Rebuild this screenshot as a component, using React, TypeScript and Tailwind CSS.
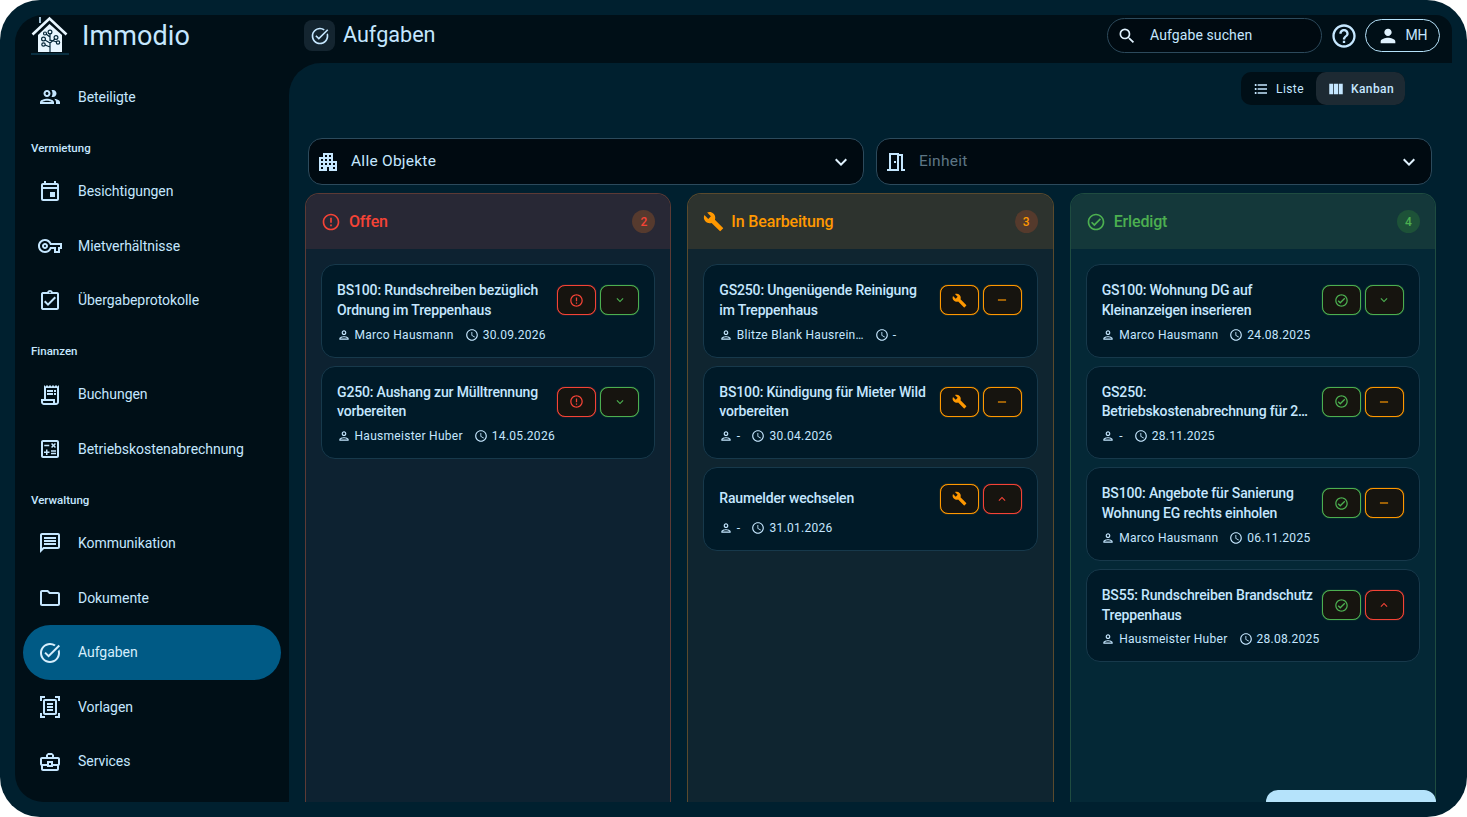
import React from 'react';
import {
    MdOutlineGroup,
    MdOutlineEvent,
    MdOutlineVpnKey,
    MdOutlineAssignmentTurnedIn,
    MdOutlineReceiptLong,
    MdOutlineCalculate,
    MdOutlineMessage,
    MdOutlineFolder,
    MdOutlineTaskAlt,
    MdOutlineDocumentScanner,
    MdOutlineBusinessCenter,
    MdSearch,
    MdOutlineHelpOutline,
    MdPerson,
    MdOutlinePerson,
    MdFormatListBulleted,
    MdViewColumn,
    MdApartment,
    MdOutlineMeetingRoom,
    MdKeyboardArrowDown,
    MdKeyboardArrowUp,
    MdErrorOutline,
    MdBuild,
    MdOutlineCheckCircle,
    MdRemove,
    MdOutlineSchedule,
} from 'react-icons/md';

type TStatus = 'open' | 'progress' | 'done';
type TPriority = 'low' | 'medium' | 'high';

interface ITask {
    title: string;
    person: string;
    date: string;
    status: TStatus;
    priority: TPriority;
}

const navSections = [
    { label: '', items: [{ name: 'Beteiligte', icon: MdOutlineGroup }] },
    {
        label: 'Vermietung',
        items: [
            { name: 'Besichtigungen', icon: MdOutlineEvent },
            { name: 'Mietverhältnisse', icon: MdOutlineVpnKey },
            { name: 'Übergabeprotokolle', icon: MdOutlineAssignmentTurnedIn },
        ],
    },
    {
        label: 'Finanzen',
        items: [
            { name: 'Buchungen', icon: MdOutlineReceiptLong },
            { name: 'Betriebskostenabrechnung', icon: MdOutlineCalculate },
        ],
    },
    {
        label: 'Verwaltung',
        items: [
            { name: 'Kommunikation', icon: MdOutlineMessage },
            { name: 'Dokumente', icon: MdOutlineFolder },
            { name: 'Aufgaben', icon: MdOutlineTaskAlt },
            { name: 'Vorlagen', icon: MdOutlineDocumentScanner },
            { name: 'Services', icon: MdOutlineBusinessCenter },
        ],
    },
];

const openTasks: ITask[] = [
    { title: 'BS100: Rundschreiben bezüglich\nOrdnung im Treppenhaus', person: 'Marco Hausmann', date: '30.09.2026', status: 'open', priority: 'low' },
    { title: 'G250: Aushang zur Mülltrennung\nvorbereiten', person: 'Hausmeister Huber', date: '14.05.2026', status: 'open', priority: 'low' },
];

const progressTasks: ITask[] = [
    { title: 'GS250: Ungenügende Reinigung\nim Treppenhaus', person: 'Blitze Blank Hausrein…', date: '-', status: 'progress', priority: 'medium' },
    { title: 'BS100: Kündigung für Mieter Wild\nvorbereiten', person: '-', date: '30.04.2026', status: 'progress', priority: 'medium' },
    { title: 'Raumelder wechselen', person: '-', date: '31.01.2026', status: 'progress', priority: 'high' },
];

const doneTasks: ITask[] = [
    { title: 'GS100: Wohnung DG auf\nKleinanzeigen inserieren', person: 'Marco Hausmann', date: '24.08.2025', status: 'done', priority: 'low' },
    { title: 'GS250:\nBetriebskostenabrechnung für 2…', person: '-', date: '28.11.2025', status: 'done', priority: 'medium' },
    { title: 'BS100: Angebote für Sanierung\nWohnung EG rechts einholen', person: 'Marco Hausmann', date: '06.11.2025', status: 'done', priority: 'medium' },
    { title: 'BS55: Rundschreiben Brandschutz\nTreppenhaus', person: 'Hausmeister Huber', date: '28.08.2025', status: 'done', priority: 'high' },
];

const Logo = () => (
    <svg width="38" height="40" viewBox="0 0 38 40" className="shrink-0">
        <path d="M9 1v6" stroke="#c5e7ff" strokeWidth="1.6" />
        <path d="M1.5 18.5 18.5 2.5l17 16" fill="none" stroke="#e8f6ff" strokeWidth="2.6" />
        <path d="M7 19 18.5 8 31 19v17H7z" fill="#e8f6ff" />
        <path d="M0 38h38" stroke="#0d3b50" strokeWidth="1.6" />
        <g fill="none" stroke="#06283a" strokeWidth="1.2">
            <path d="M19 36V27l-5-3M19 27l5-4M19 25v-8M19 21l-4-3M19 24l7 2M14 29l5 2" />
            <circle cx="12.5" cy="23" r="1.9" />
            <circle cx="25" cy="21.5" r="1.9" />
            <circle cx="19" cy="16" r="1.9" />
            <circle cx="14" cy="17.5" r="1.5" />
            <circle cx="27" cy="26.5" r="1.7" />
            <circle cx="12.5" cy="28.5" r="1.7" />
        </g>
    </svg>
);

const Sidebar = () => (
    <aside className="flex w-[274px] shrink-0 flex-col">
        <div className="mb-[13px] flex h-[42px] items-center">
            <div className="ml-[16px]">
                <Logo />
            </div>
            <span className="ml-[13px] text-[27px] tracking-[0.1px] text-[#c5e7ff]">Immodio</span>
        </div>
        {navSections.map((section) => (
            <div key={section.label}>
                {section.label && (
                    <div className="flex h-[39.5px] items-end pb-[8px] pl-[16px] text-[11.5px] font-medium leading-4 text-[#c5e7ff]">
                        {section.label}
                    </div>
                )}
                {section.items.map((item) => {
                    const Icon = item.icon;
                    const active = item.name === 'Aufgaben';
                    return (
                        <div
                            key={item.name}
                            className={`mx-2 flex h-[54.6px] w-[258px] items-center rounded-full pl-[15px] text-[14px] tracking-[-0.05px] ${
                                active ? 'bg-[#005a85] text-[#d6eefc]' : 'text-[#c5e7ff]'
                            }`}
                        >
                            <Icon size={24} className="shrink-0" />
                            <span className="ml-[16px] mt-[0.5px]">{item.name}</span>
                        </div>
                    );
                })}
            </div>
        ))}
    </aside>
);

const TopBar = () => (
    <header className="flex h-[48px] shrink-0 items-center pb-[7px] pl-[15px] pr-[12px]">
        <div className="flex h-[31px] w-[31px] items-center justify-center rounded-lg bg-[#142530] text-[#c5e7ff]">
            <MdOutlineTaskAlt size={20} />
        </div>
        <h1 className="ml-2 text-[21.6px] text-[#c5e7ff]">Aufgaben</h1>
        <div className="ml-auto flex h-[35px] w-[215px] items-center rounded-full border border-[#2c4a5c] bg-[#000a11] pl-[9px] text-[14px] tracking-[0.1px] text-[#c5e7ff]">
            <MdSearch size={20} className="text-[#e0f2fe]" />
            <span className="ml-[13px]">Aufgabe suchen</span>
        </div>
        <MdOutlineHelpOutline size={28} className="ml-2 text-[#c5e7ff]" />
        <div className="ml-[7px] flex h-[33px] w-[75px] items-center justify-center gap-[6px] rounded-full border border-[#b5e2fa] text-[14px] text-[#c5e7ff]">
            <MdPerson size={22} className="text-[#e0f2fe]" />
            <span>MH</span>
        </div>
    </header>
);

const ViewToggle = () => (
    <div className="mr-[47px] mt-[9px] flex h-[33px] self-end rounded-[10px] bg-[#000f17] text-[12px] tracking-[0.4px] text-[#c5e7ff]">
        <div className="flex w-[75px] items-center justify-center gap-[7px]">
            <MdFormatListBulleted size={16} />
            <span>Liste</span>
        </div>
        <div className="flex w-[89px] items-center justify-center gap-[6px] rounded-[10px] bg-[#1d2a33] font-medium">
            <MdViewColumn size={18} />
            <span>Kanban</span>
        </div>
    </div>
);

const ObjectSelect: React.FC<{ label: string; dimmed?: boolean; icon: React.ElementType }> = ({ label, dimmed, icon: Icon }) => (
    <div className="flex h-[47px] flex-1 items-center rounded-[14px] border border-[#2c4a5c] bg-[#000a11] pl-[7px] pr-[10px]">
        <Icon size={24} className="text-[#c5e7ff]" />
        <span className={`ml-[11px] text-[15.5px] tracking-[0.25px] ${dimmed ? 'text-[#5d7685]' : 'text-[#c5e7ff]'}`}>{label}</span>
        <MdKeyboardArrowDown size={24} className="ml-auto text-[#e0f2fe]" />
    </div>
);

const statusButton = {
    open: { color: 'text-[#f44336]', icon: MdErrorOutline },
    progress: { color: 'text-[#ff9800]', icon: MdBuild },
    done: { color: 'text-[#4caf50]', icon: MdOutlineCheckCircle },
};

const priorityButton = {
    low: { color: 'text-[#4caf50]', icon: MdKeyboardArrowDown },
    medium: { color: 'text-[#ff9800]', icon: MdRemove },
    high: { color: 'text-[#f44336]', icon: MdKeyboardArrowUp },
};

const TaskCard: React.FC<{ task: ITask }> = ({ task }) => {
    const status = statusButton[task.status];
    const priority = priorityButton[task.priority];
    const StatusIcon = status.icon;
    const PriorityIcon = priority.icon;

    return (
        <div className="rounded-[14px] border border-[#17394b] bg-[#001a28] px-[15px] pb-[13px] pt-[15px]">
            <div className="flex min-h-[31px] items-center gap-1">
                <div className="min-w-0 flex-1 pt-[1px] text-[14px] font-medium leading-[19.8px] tracking-[-0.16px] text-[#c5e7ff]">
                    {task.title.split('\n').map((line) => (
                        <span key={line} className="block whitespace-nowrap">{line}</span>
                    ))}
                </div>
                <div className="flex shrink-0 gap-1">
                    <div className={`flex h-[30px] w-[39px] items-center justify-center rounded-lg border border-current shadow-[0_0_1px_currentColor] ${status.color} bg-[#16140f]`}>
                        <StatusIcon size={15} />
                    </div>
                    <div className={`flex h-[30px] w-[39px] items-center justify-center rounded-lg border border-current shadow-[0_0_1px_currentColor] ${priority.color} bg-[#16140f]`}>
                        <PriorityIcon size={14} />
                    </div>
                </div>
            </div>
            <div className="mt-[5px] flex h-[18px] items-center text-[12px] tracking-[0.28px] text-[#c5e7ff]">
                <MdOutlinePerson size={14} className="-ml-[0.5px] shrink-0" />
                <span className="ml-[4px]">{task.person}</span>
                <MdOutlineSchedule size={14} className="ml-[11px] shrink-0" />
                <span className="ml-[4px]">{task.date}</span>
            </div>
        </div>
    );
};

interface IColumn {
    title: string;
    tasks: ITask[];
    icon: React.ElementType;
    iconSize: number;
    classes: {
        border: string;
        header: string;
        body: string;
        text: string;
        badge: string;
    };
}

const columns: IColumn[] = [
    {
        title: 'Offen',
        tasks: openTasks,
        icon: MdErrorOutline,
        iconSize: 20,
        classes: { border: 'border-[#5c3a35]', header: 'bg-[#282835]', body: 'bg-[#0d2231]', text: 'text-[#f44336]', badge: 'bg-[#563a2e]' },
    },
    {
        title: 'In Bearbeitung',
        tasks: progressTasks,
        icon: MdBuild,
        iconSize: 21,
        classes: { border: 'border-[#5a4a2d]', header: 'bg-[#2d332e]', body: 'bg-[#0f2530]', text: 'text-[#ff9800]', badge: 'bg-[#553a2c]' },
    },
    {
        title: 'Erledigt',
        tasks: doneTasks,
        icon: MdOutlineCheckCircle,
        iconSize: 20,
        classes: { border: 'border-[#1f4c40]', header: 'bg-[#14383a]', body: 'bg-[#042836]', text: 'text-[#4caf50]', badge: 'bg-[#1d5238]' },
    },
];

const KanbanColumn: React.FC<{ column: IColumn }> = ({ column }) => {
    const Icon = column.icon;
    return (
        <section className={`flex min-w-0 flex-1 flex-col overflow-hidden rounded-t-[14px] border border-b-0 ${column.classes.border} ${column.classes.body}`}>
            <div className={`flex h-[55px] shrink-0 items-center pl-[15px] pr-[15px] ${column.classes.header} ${column.classes.text}`}>
                <span className="flex w-[20px] shrink-0 justify-center">
                    <Icon size={column.iconSize} className="shrink-0" />
                </span>
                <span className="ml-2 text-[16px] font-medium tracking-[-0.15px]">{column.title}</span>
                <span className={`ml-auto flex h-[23px] w-[23px] items-center justify-center rounded-full text-[12px] font-medium ${column.classes.badge}`}>
                    {column.tasks.length}
                </span>
            </div>
            <div className="flex flex-col gap-2 px-[15px] pt-[15px]">
                {column.tasks.map((task) => (
                    <TaskCard key={task.title} task={task} />
                ))}
            </div>
        </section>
    );
};

export default function App() {
    return (
        <div className="h-[817px] w-[1467px] overflow-hidden bg-white" style={{ fontFamily: 'Roboto, sans-serif' }}>
            <div className="h-full rounded-[40px] bg-[#00202f] p-[15px]">
                <div className="flex h-full overflow-hidden rounded-l-[28px] rounded-tr-[16px] bg-[#000f17]">
                    <Sidebar />
                    <div className="flex min-w-0 flex-1 flex-col">
                        <TopBar />
                        <main className="relative flex min-h-0 flex-1 flex-col overflow-hidden rounded-tl-[32px] bg-[#00202f]">
                            <ViewToggle />
                            <div className="ml-[19px] mr-[20px] mt-[33px] flex gap-3">
                                <ObjectSelect label="Alle Objekte" icon={MdApartment} />
                                <ObjectSelect label="Einheit" dimmed icon={MdOutlineMeetingRoom} />
                            </div>
                            <div className="ml-[16px] mr-[16px] mt-[8px] flex min-h-0 flex-1 gap-4">
                                {columns.map((column) => (
                                    <KanbanColumn key={column.title} column={column} />
                                ))}
                            </div>
                            <div className="absolute bottom-0 right-[16px] h-[12px] w-[170px] rounded-t-[16px] bg-[#b5e3fb]" />
                        </main>
                    </div>
                </div>
            </div>
        </div>
    );
}
